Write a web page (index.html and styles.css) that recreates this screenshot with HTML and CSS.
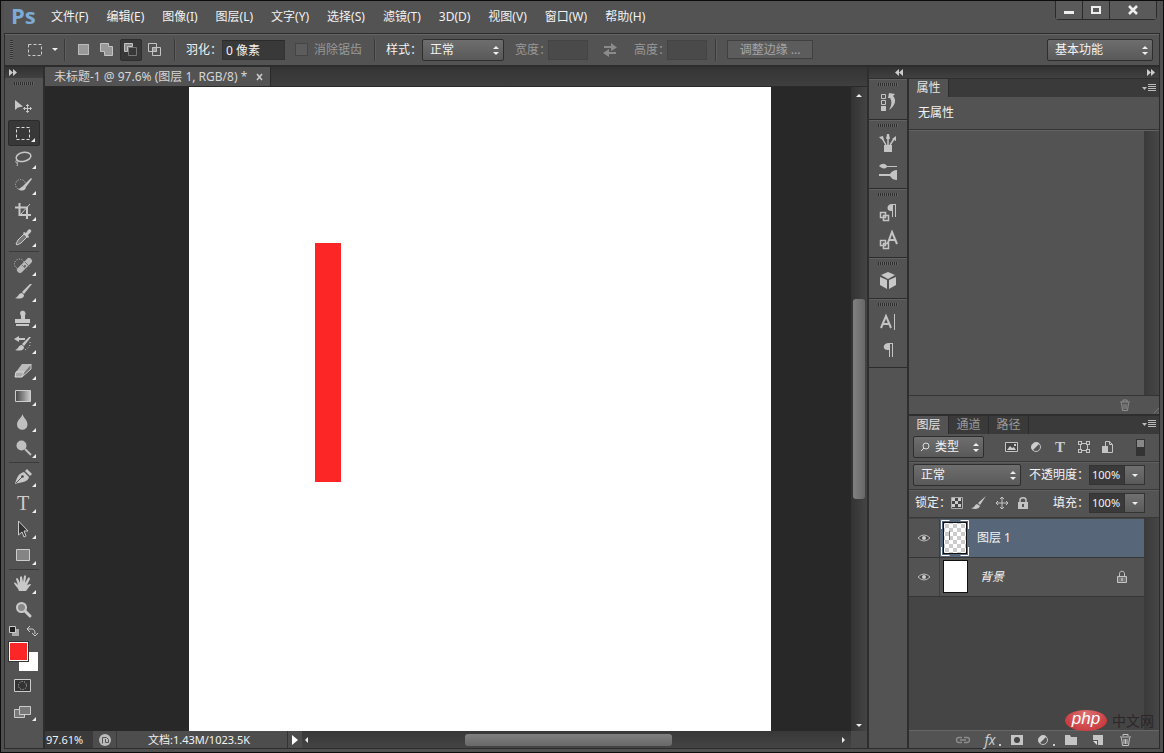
FILE: index.html
```
<!DOCTYPE html>
<html lang="zh-CN">
<head>
<meta charset="utf-8">
<title>未标题-1</title>
<link rel="stylesheet" href="styles.css">
</head>
<body>
<div class="window">
  <header class="menubar">
    <span class="logo">Ps</span>
    <nav class="menu">
      <button>文件(F)</button><button>编辑(E)</button><button>图像(I)</button><button>图层(L)</button><button>文字(Y)</button><button>选择(S)</button><button>滤镜(T)</button><button>3D(D)</button><button>视图(V)</button><button>窗口(W)</button><button>帮助(H)</button>
    </nav>
    <div class="winbuttons">
      <button class="wb" aria-label="最小化"><svg width="12" height="12"><path d="M1 7h10v3H1z" fill="#eee"/></svg></button>
      <button class="wb" aria-label="最大化"><svg width="12" height="12"><path d="M2 3h8v6H2z" fill="none" stroke="#eee" stroke-width="2"/></svg></button>
      <button class="wb wide" aria-label="关闭"><svg width="12" height="12"><path d="M2 2l8 8M10 2l-8 8" stroke="#eee" stroke-width="2.500"/></svg></button>
    </div>
  </header>

  <div class="options">
    <span class="vgrip"></span>
    <button class="preset" aria-label="矩形选框工具"><svg width="16" height="14"><rect x="1.500" y="1.500" width="13" height="11" fill="none" stroke="#ccc" stroke-dasharray="3 2"/></svg><i class="down"></i></button>
    <span class="div"></span>
    <div class="modes">
      <button aria-label="新选区"><svg width="16" height="16"><path d="M3 2h11v11H3z" fill="#999"/><path d="M3.500 2.500h10v10h-10z" fill="none" stroke="#bbb"/></svg></button>
      <button aria-label="添加到选区"><svg width="16" height="16"><path d="M1.500 1.500h8v3h4v9h-8v-4h-4z" fill="#999" stroke="#c4c4c4"/></svg></button>
      <button class="on" aria-label="从选区减去"><svg width="16" height="16"><path d="M5.500 5.500h8v8h-8z" fill="none" stroke="#777"/><path d="M1.500 1.500h8v3h-5v5h-3z" fill="#888" stroke="#c4c4c4"/></svg></button>
      <button aria-label="与选区交叉"><svg width="16" height="16"><path d="M5 5h5v5H5z" fill="#999"/><path d="M1.500 1.500h8v8h-8zM5.500 5.500h8v8h-8z" fill="none" stroke="#c4c4c4"/></svg></button>
    </div>
    <span class="div"></span>
    <label for="feather">羽化：</label><input id="feather" class="field feather" value="0 像素">
    <label class="check off"><input type="checkbox" disabled>消除锯齿</label>
    <span class="div"></span>
    <label for="style">样式：</label>
    <span class="drop stylesel"><select id="style"><option>正常</option></select><i class="updown"></i></span>
    <label class="off" for="w">宽度：</label><input id="w" class="field small" disabled>
    <button class="swapwh" aria-label="互换宽高"><svg width="14" height="14"><path d="M1 3h7V0l6 4.500L8 8V5H1zM13 9H6V6L0 10l6 4v-3h7z" fill="#8b8b8b"/></svg></button>
    <label class="off" for="h">高度：</label><input id="h" class="field small" disabled>
    <span class="div"></span>
    <button class="refine" disabled>调整边缘 ...</button>
    <span class="drop workspace"><select aria-label="工作区"><option>基本功能</option></select><i class="updown"></i></span>
  </div>

  <div class="main">
    <aside class="toolbar">
      <button class="strip" aria-label="展开工具栏"><svg width="10" height="7"><path d="M1 0l4 3.500L1 7zM5 0l4 3.500L5 7z" fill="#ccc"/></svg></button>
      <span class="grip"></span>
      <div class="tools">
        <button class="plain" aria-label="移动"><svg viewBox="0 0 20 20"><path d="M2 3v10l3-2.500 5-1z" fill="#c8c8c8"/><path d="M10.500 11.500h8M14.500 7.500v8M13 9l1.500-1.500L16 9M13 14l1.500 1.500L16 14M12 10l-1.500 1.500L12 13M17 10l1.500 1.500L17 13" fill="none" stroke="#c8c8c8"/></svg></button>
        <button class="on" aria-label="矩形选框"><svg viewBox="0 0 20 20"><rect x="3.500" y="4.500" width="13" height="12" fill="none" stroke="#ddd" stroke-dasharray="3 2"/></svg></button>
        <button aria-label="套索"><svg viewBox="0 0 20 20"><ellipse cx="10.500" cy="8" rx="7.500" ry="4.500" transform="rotate(-12 10 8)" fill="none" stroke="#c8c8c8" stroke-width="1.500"/><path d="M4 11c-2 1-1 3 0 3s2-2 0-2M4 14c0 1 1 1 0 3" fill="none" stroke="#c8c8c8"/></svg></button>
        <button aria-label="快速选择"><svg viewBox="0 0 20 20"><circle cx="7.500" cy="9.500" r="5" fill="none" stroke="#ccc" stroke-dasharray="1 1.500"/><path d="M19 4l-6 8-3-1 8-8zM12 12l-1-1c-3 0-3 3-6 3 4 3 8 1 8-2z" fill="#c8c8c8"/></svg></button>
        <button aria-label="裁剪"><svg viewBox="0 0 20 20"><path d="M6.500 2v12H18M2 6.500h12V18" fill="none" stroke="#c8c8c8" stroke-width="2"/><path d="M8 13l9-10" stroke="#c8c8c8"/></svg></button>
        <button aria-label="吸管"><svg viewBox="0 0 20 20"><path d="M3 17l2-4 6-6 3 3-6 6-4 2z" fill="#777" stroke="#ccc"/><path d="M10 6l1-1 2 1 2-3c2-2 4 0 3 2l-3 3 1 2-1 1z" fill="#c8c8c8"/></svg></button>
        <hr>
        <button aria-label="污点修复画笔"><svg viewBox="0 0 20 20"><circle cx="6.500" cy="8" r="5" fill="none" stroke="#ccc" stroke-dasharray="1 1.500"/><path d="M7 14l9-9" stroke="#b8b8b8" stroke-width="6" stroke-linecap="round"/><path d="M9 9l5 5M12 6l5 5" stroke="#777"/><path d="M12 9v2m-1-1h2" stroke="#555"/></svg></button>
        <button aria-label="画笔"><svg viewBox="0 0 20 20"><path d="M19 2l-8 10-2-2 8-8zM9 11l2 2c0 4-5 4-9 3 4-1 3-5 7-5z" fill="#c8c8c8"/></svg></button>
        <button aria-label="仿制图章"><svg viewBox="0 0 20 20"><path d="M8 8C4 1 15 1 12 8v3h5v4H2v-4h6zM3 16h13v2H3z" fill="#c8c8c8"/></svg></button>
        <button aria-label="历史记录画笔"><svg viewBox="0 0 20 20"><path d="M18 3l-7 9-2-2 7-7zM9 11l2 2c0 4-5 4-9 3 4-1 3-5 7-5zM1 5l5-3v2h6v2H6v2z" fill="#c8c8c8"/><path d="M17 8c1 4-2 6-5 8" fill="none" stroke="#ccc" stroke-dasharray="1 2"/></svg></button>
        <button aria-label="橡皮擦"><svg viewBox="0 0 20 20"><path d="M3 12l6-8h9l-7 8z" fill="#bbb"/><path d="M3 12h8l-2 5H2z" fill="#aaa" stroke="#ddd"/><path d="M11 12l7-8v5l-9 8z" fill="#777" stroke="#ccc"/></svg></button>
        <button aria-label="渐变"><svg viewBox="0 0 20 20"><defs><linearGradient id="gr"><stop stop-color="#444"/><stop offset="1" stop-color="#ccc"/></linearGradient></defs><path d="M2.500 4.500h15v11h-15z" fill="url(#gr)" stroke="#ccc"/></svg></button>
        <button aria-label="模糊"><svg viewBox="0 0 20 20"><path d="M9.500 2c1 4 5 6 5 10.500a5 5 0 0 1-10.500 0C4 8 8.500 6 9.500 2z" fill="#c0c0c0"/></svg></button>
        <button aria-label="减淡"><svg viewBox="0 0 20 20"><circle cx="8.500" cy="7.500" r="5" fill="#c0c0c0"/><path d="M12 11l6 6" stroke="#c0c0c0" stroke-width="2"/></svg></button>
        <hr>
        <button aria-label="钢笔"><svg viewBox="0 0 20 20"><path d="M2 17C4 10 5 7 11 5l5 5c-1 5-7 5-14 7zM12 4l2-2 5 5-2 2z" fill="#c8c8c8"/><path d="M3 16l6-6" stroke="#555"/><circle cx="9.500" cy="9.500" r="1.300" fill="#444"/></svg></button>
        <button aria-label="横排文字"><span class="serif">T</span></button>
        <button aria-label="路径选择"><svg viewBox="0 0 20 20"><path d="M5.500 2v14l3.500-3 2 5 2-1-2-5h4z" fill="#333" stroke="#ccc"/></svg></button>
        <button aria-label="矩形"><svg viewBox="0 0 20 20"><path d="M3.500 4.500h13v11h-13z" fill="#858585" stroke="#ccc"/></svg></button>
        <hr>
        <button aria-label="抓手"><svg viewBox="0 0 20 20"><path d="M6 17c-1-4-4-5-5-8 1-1 2 0 4 2L3 5c1-2 2-1 4 4V3c1-1 2-1 2 0l1 5 1-6c1-1 2-1 2 1l-1 6 3-5c1-1 2 0 2 1l-3 6 3-1c2 0 0 2-1 3l-3 4z" fill="#c8c8c8"/></svg></button>
        <button class="plain" aria-label="缩放"><svg viewBox="0 0 20 20"><circle cx="8.500" cy="7.500" r="4.500" fill="#888" stroke="#ccc" stroke-width="2"/><path d="M12 11l5 5" stroke="#ccc" stroke-width="3" stroke-linecap="round"/></svg></button>
      </div>
      <div class="mini">
        <button aria-label="默认颜色"><svg width="12" height="12"><path d="M4 4h7v7H4z" fill="#aaa"/><path d="M1.500 1.500h6v6h-6z" fill="#222" stroke="#ccc"/></svg></button>
        <button aria-label="切换颜色"><svg width="12" height="12"><path d="M2 4h4q3 0 3 5M4 1L1 4l3 3M6 8l3 3 3-3" fill="none" stroke="#ccc"/></svg></button>
      </div>
      <div class="swatches"><button class="bgc" aria-label="背景色"></button><button class="fgc" aria-label="前景色"></button></div>
      <div class="tools last">
        <button class="plain" aria-label="快速蒙版"><svg viewBox="0 0 20 20"><path d="M1.500 4.500h16v12h-16z" fill="#333" stroke="#ccc"/><circle cx="9.500" cy="10.500" r="4" fill="none" stroke="#ccc" stroke-dasharray="1 1.500"/></svg></button>
        <button aria-label="屏幕模式"><svg viewBox="0 0 20 20"><path d="M1.500 8.500h10v8h-10z" fill="#777" stroke="#ccc"/><path d="M6.500 5.500h11v8h-11z" fill="#777" stroke="#ccc"/></svg></button>
      </div>
    </aside>

    <section class="document">
      <div class="doctabs"><div class="doctab"><span>未标题-1 @ 97.6% (图层 1, RGB/8) *</span><button aria-label="关闭文档"><svg width="8" height="8"><path d="M1 1l5 6M6 1L1 7" stroke="#ccc" stroke-width="1.500"/></svg></button></div></div>
      <div class="view">
        <div class="stage"><div class="paper"><div class="redbar"></div></div></div>
        <div class="vscroll"><i class="up"></i><span class="vtrack"><b></b></span><i class="down"></i></div>
      </div>
      <div class="status">
        <input class="zoom" value="97.61%" aria-label="缩放比例">
        <button class="share" aria-label="共享"><svg width="12" height="12"><circle cx="6" cy="6" r="6" fill="#bbb"/><path d="M3.500 9.500v-6h4l2 2" fill="none" stroke="#555"/><path d="M6.500 5v3.500h3v-3" fill="none" stroke="#555"/></svg></button>
        <span class="size">文档:1.43M/1023.5K</span>
        <button class="play" aria-label="状态选项"><svg width="8" height="10"><path d="M1 0l6 5-6 5z" fill="#fff"/></svg></button>
        <div class="hscroll"><i class="left"></i><span class="htrack"><b></b></span><i class="right"></i></div>
        <span class="corner"></span>
      </div>
    </section>

    <section class="side">
      <div class="strips"><button class="strip a" aria-label="展开面板"><svg width="10" height="7"><path d="M5 0L1 3.500 5 7zM9 0L5 3.500 9 7z" fill="#ccc"/></svg></button><button class="strip b" aria-label="折叠面板"><svg width="10" height="7"><path d="M1 0l4 3.500L1 7zM5 0l4 3.500L5 7z" fill="#ccc"/></svg></button></div>
      <div class="cols">
        <div class="dock">
          <div class="group"><span class="grip"></span><button aria-label="历史记录"><svg viewBox="0 0 20 20"><path d="M3.500 2.500h4v4h-4zM3.500 8.500h4v4h-4z" fill="none" stroke="#c4c4c4"/><path d="M3 14h5v5H3zM10 6l1-5 6 1-2 2c4 4 2 10-4 14 3-5 3-9 1-12z" fill="#c4c4c4"/></svg></button></div>
          <div class="group"><span class="grip"></span><button aria-label="画笔预设"><svg viewBox="0 0 20 20"><path d="M6 12h8v7H6z" fill="#c4c4c4"/><path d="M8 12L4 5M10 12V4M12 12l4-6" stroke="#c4c4c4" stroke-width="1.500"/><path d="M1 4l4-1 1 4-3-1zM9 1l2 0 1 5H8zM14 6l4-3v5z" fill="#c4c4c4"/></svg></button><button aria-label="画笔"><svg viewBox="0 0 20 20"><path d="M1 5c3-3 6-3 8 0h10v1H9C6 9 4 7 1 5zM1 13h11c2-3 4-4 7-4v10c-3 0-5-1-7-4H1z" fill="#c4c4c4"/></svg></button></div>
          <div class="group"><span class="grip"></span><button aria-label="段落样式"><svg viewBox="0 0 20 20"><path d="M18 2v13h-1V3h-2v12h-1V9c-6 1-6-7 0-7z" fill="#c4c4c4"/><path d="M2.500 10.500h5v5h-5zM5.500 13.500h5v5h-5z" fill="none" stroke="#c4c4c4" stroke-width="1.500"/></svg></button><button aria-label="字符样式"><svg viewBox="0 0 20 20"><path d="M9.500 14L14 2l5 12M11 10h6" fill="none" stroke="#c4c4c4" stroke-width="2"/><path d="M2.500 10.500h5v5h-5zM5.500 13.500h5v5h-5z" fill="none" stroke="#c4c4c4" stroke-width="1.500"/></svg></button></div>
          <div class="group"><span class="grip"></span><button aria-label="3D"><svg viewBox="0 0 20 20"><path d="M10 1l7 3-7 4-7-4zM2 6l7 3v9l-7-4zM18 6l-7 3v9l7-4z" fill="#c8c8c8"/></svg></button></div>
          <div class="group"><span class="grip"></span><button aria-label="字符"><svg viewBox="0 0 20 20"><path d="M3 16L8 4l5 12M5 12h6" fill="none" stroke="#c4c4c4" stroke-width="2"/><path d="M16.500 2v16" stroke="#c4c4c4"/></svg></button><button aria-label="段落"><svg viewBox="0 0 20 20"><path d="M15 3v14h-1V4h-2v13h-1v-7c-7 1-7-7 0-7z" fill="#c4c4c4"/></svg></button></div>
        </div>
        <div class="panels">
          <section class="props">
            <div class="tabs"><button class="tab on">属性</button><button class="pmenu" aria-label="面板菜单"><svg width="14" height="9"><path d="M0 3h5L2.500 6zM6 0h8v1H6zM6 2h8v1H6zM6 4h8v1H6zM6 6h8v1H6z" fill="#bbb"/></svg></button></div>
            <div class="none">无属性</div>
            <div class="blank"><span></span></div>
            <div class="pfoot"><button aria-label="删除"><svg width="12" height="12"><path d="M1 3h10M4 3V1h4v2M2.500 4l1 7.500h5l1-7.500M5 5v5M7 5v5" fill="none" stroke="#909090"/></svg></button><span class="resize"></span></div>
          </section>
          <section class="layers">
            <div class="tabs"><button class="tab on">图层</button><button class="tab">通道</button><button class="tab">路径</button><button class="pmenu" aria-label="面板菜单"><svg width="14" height="9"><path d="M0 3h5L2.500 6zM6 0h8v1H6zM6 2h8v1H6zM6 4h8v1H6zM6 6h8v1H6z" fill="#bbb"/></svg></button></div>
            <div class="row filter">
              <span class="drop kind"><svg class="lens" width="10" height="10"><circle cx="6" cy="4" r="3" fill="none" stroke="#ddd"/><path d="M4 6L1 9" stroke="#ddd"/></svg><select aria-label="滤镜类型"><option>类型</option></select><i class="updown"></i></span>
              <div class="ficons">
                <button aria-label="像素图层"><svg width="14" height="14"><path d="M.500 2.500h12v9H.500z" fill="#444" stroke="#c4c4c4"/><path d="M2 10l3-4 2 2 2-1 2 3zM9 4h2v2H9z" fill="#ccc"/></svg></button>
                <button aria-label="调整图层"><svg width="14" height="14"><circle cx="7" cy="7" r="4.500" fill="#555" stroke="#c4c4c4"/><path d="M3.500 10.500A5 5 0 0 1 10.500 3.500z" fill="#ccc"/></svg></button>
                <button aria-label="文字图层"><span class="serif">T</span></button>
                <button aria-label="形状图层"><svg width="14" height="14"><path d="M3.500 3.500h7v7h-7z" fill="none" stroke="#c4c4c4"/><path d="M1 1h4v4H1zM9 1h4v4H9zM1 9h4v4H1zM9 9h4v4H9z" fill="#c4c4c4"/><path d="M2 2h2v2H2zM10 2h2v2h-2zM2 10h2v2H2zM10 10h2v2h-2z" fill="#555"/></svg></button>
                <button aria-label="智能对象"><svg width="14" height="14"><path d="M4.500 6V1.500h4l3 3v8H7M8.500 1.500v3h3" fill="none" stroke="#c4c4c4"/><path d="M1 6h6v7H1z" fill="#c4c4c4"/></svg></button>
              </div>
              <button class="toggle" aria-label="打开图层过滤"></button>
            </div>
            <div class="row">
              <span class="drop blend"><select aria-label="混合模式"><option>正常</option></select><i class="updown"></i></span>
              <label for="op">不透明度：</label><span class="pct"><input id="op" value="100%"><button aria-label="不透明度滑块"><i class="down"></i></button></span>
            </div>
            <div class="row lock">
              <span>锁定：</span>
              <div class="locks">
                <button aria-label="锁定透明像素"><svg width="12" height="12"><path d="M.500 .500h11v11H.500z" fill="#444" stroke="#aaa"/><path d="M1 1h3v3H1zM7 1h3v3H7zM4 4h3v3H4zM1 7h3v3H1zM7 7h3v3H7z" fill="#ccc"/></svg></button>
                <button aria-label="锁定图像像素"><svg width="16" height="14"><path d="M15 0L9 9 7 7zM6 8l3 2c-1 3-5 4-9 2 4 0 3-3 6-4z" fill="#c8c8c8"/></svg></button>
                <button aria-label="锁定位置"><svg width="14" height="14"><path d="M1 7h12M7 1v12M5 3l2-2 2 2M5 11l2 2 2-2M3 5L1 7l2 2M11 5l2 2-2 2" fill="none" stroke="#c4c4c4"/></svg></button>
                <button aria-label="锁定全部"><svg width="12" height="14"><path d="M3 6V4c0-3 6-3 6 0v2" fill="none" stroke="#c4c4c4" stroke-width="1.500"/><path d="M1 6h10v7H1z" fill="#c4c4c4"/><path d="M5 8h2v3H5z" fill="#555"/></svg></button>
              </div>
              <label for="fill">填充：</label><span class="pct"><input id="fill" value="100%"><button aria-label="填充滑块"><i class="down"></i></button></span>
            </div>
            <div class="listwrap">
              <ul class="list">
                <li class="sel"><button class="eye" aria-label="可见性"><svg width="14" height="10"><path d="M1 5q6-6 12 0-6 6-12 0z" fill="#444" stroke="#bbb"/><circle cx="7" cy="5" r="2" fill="#ccc"/></svg></button><span class="frame"><svg width="28" height="36"><defs><pattern id="ck" width="8" height="8" patternUnits="userSpaceOnUse"><path d="M0 0h8v8H0z" fill="#fff"/><path d="M0 0h4v4H0zM4 4h4v4H4z" fill="#ccc"/></pattern></defs><path d="M2 2h24v32H2z" fill="#111"/><path d="M3 3h22v30H3z" fill="url(#ck)"/><path d="M8 11h1v9H8z" fill="#f33"/><path d="M.500 9V.500h8M19.500 .500h8V9M27.500 27v8.500h-8M8.500 35.500h-8V27" fill="none" stroke="#fff"/></svg></span><span>图层 1</span></li>
                <li><button class="eye" aria-label="可见性"><svg width="14" height="10"><path d="M1 5q6-6 12 0-6 6-12 0z" fill="#444" stroke="#bbb"/><circle cx="7" cy="5" r="2" fill="#ccc"/></svg></button><span class="frame"><span class="white"></span></span><em>背景</em><svg class="padlock" width="12" height="13"><path d="M3.500 6V3.500c0-3 5-3 5 0V6" fill="none" stroke="#c4c4c4"/><path d="M1.500 6.500h9v6h-9z" fill="#777" stroke="#c4c4c4"/><path d="M5.500 8h1v3h-1z" fill="#ddd"/></svg></li>
              </ul>
              <span class="lscroll"></span>
            </div>
            <div class="lfoot">
              <button aria-label="链接图层"><svg width="16" height="14"><path d="M7 4.500H4a2.500 2.500 0 0 0 0 5h3M9 4.500h3a2.500 2.500 0 0 1 0 5H9M5 7h6" fill="none" stroke="#8c8c8c" stroke-width="1.300"/></svg></button>
              <button class="fx" aria-label="图层样式">fx<i></i></button>
              <button aria-label="图层蒙版"><svg width="16" height="14"><path d="M2 2h12v10H2z" fill="#c4c4c4"/><circle cx="8" cy="7" r="3" fill="#444"/></svg></button>
              <button class="adj" aria-label="调整图层"><svg width="16" height="14"><circle cx="7" cy="7" r="4.500" fill="#555" stroke="#c4c4c4"/><path d="M3.500 10.500A5 5 0 0 1 10.500 3.500z" fill="#ccc"/></svg><i></i></button>
              <button aria-label="新建组"><svg width="16" height="14"><path d="M2 2h5l1 2h6v8H2z" fill="#c4c4c4"/></svg></button>
              <button aria-label="新建图层"><svg width="16" height="14"><path d="M3 2h10v10H8V7H3z" fill="#c4c4c4"/><path d="M3 8h4v4z" fill="#ddd"/></svg></button>
              <button aria-label="删除图层"><svg width="16" height="14"><path d="M3 4h11M6 3V1.500h5V3M4.500 5l1 7.500h6l1-7.500M7 6v5M8.500 6v5M10 6v5" fill="none" stroke="#c4c4c4"/></svg></button>
            </div>
          </section>
        </div>
      </div>
    </section>
  </div>
  <div class="watermark"><span class="php">php</span><span>中文网</span></div>
</div>
</body>
</html>
```
FILE: styles.css
```
* { box-sizing: border-box; }
body { margin: 0; background: #000; }
button, input, select { font: inherit; color: inherit; margin: 0; padding: 0; border: 0; background: none; border-radius: 0; outline: 0; min-width: 0; }
button { display: flex; align-items: center; justify-content: center; flex: none; }
svg { display: block; flex: none; }
label, span, button { white-space: nowrap; }
.window { position: relative; display: flex; flex-direction: column; height: 100vh; padding: 0 3px 3px; background: #505050; border: solid #0c0c0c; border-width: 1px 1px 1px; font: 12px/16px "Noto Sans", "Noto Sans CJK SC", sans-serif; color: #f2f2f2; overflow: hidden; }

.menubar { display: flex; flex: none; height: 32px; align-items: center; background: #535353; }
.logo { width: 39px; padding: 0 0 4px 7px; font: bold 22px/28px "Open Sans", sans-serif; color: #7daad6; }
.menu { display: flex; flex: 1; gap: 18px; padding-left: 8px; }
.winbuttons { display: flex; align-self: flex-start; margin-right: 3px; border: 1px solid #2a2a2a; border-top: 0; border-radius: 0 0 4px 4px; }
.wb { width: 27px; height: 18px; border-right: 1px solid #2a2a2a; background: #5a5a5a; }
.wb.wide { width: 46px; border: 0; }

.options { display: flex; flex: none; height: 34px; align-items: center; border: 1px solid #2c2c2c; border-bottom-width: 2px; background: #535353; padding: 0 6px 0 5px; box-shadow: inset 0 1px #666; }
.vgrip { width: 3px; height: 20px; margin-right: 14px; background: repeating-linear-gradient(#333 0 1px, #666 1px 2px); }
.preset { gap: 9px; }
.down, .up { width: 0; height: 0; border: 3px solid transparent; }
.down { border-top-color: #eee; border-bottom: 0; }
.up { border-bottom-color: #eee; border-top: 0; }
.div { width: 2px; height: 22px; margin: 0 6px; border-left: 1px solid #3a3a3a; border-right: 1px solid #5e5e5e; flex: none; }
.modes { display: flex; gap: 2px; margin-right: 2px; }
.modes button { width: 22px; height: 22px; }
.modes .on { background: #383838; border: 1px solid #2e2e2e; border-radius: 2px; }
.div + label { margin-left: 4px; }
.field { height: 20px; padding-left: 3px; background: #393939; border: 1px solid #333; border-top-color: #2a2a2a; }
.feather { width: 63px; margin-right: 10px; }
.small { width: 40px; background: #4a4a4a; border-color: #444; }
.off { color: #989898; }
.check { display: flex; align-items: center; gap: 6px; margin-right: 6px; }
.check input { appearance: none; width: 13px; height: 13px; background: #5c5c5c; border: 1px solid #454545; }
.drop { position: relative; display: flex; align-items: center; height: 22px; border: 1px solid #2e2e2e; border-radius: 2px; background: linear-gradient(#6e6e6e, #595959); }
.drop select { appearance: none; flex: 1; height: 20px; padding-left: 7px; }
.updown { position: absolute; right: 4px; top: 50%; width: 6px; height: 9px; margin-top: -4px; }
.updown::before, .updown::after { content: ""; position: absolute; left: 0; border: 3px solid transparent; }
.updown::before { top: 0; border-top: 0; border-bottom-color: #eee; }
.updown::after { bottom: 0; border-bottom: 0; border-top-color: #eee; }
.stylesel { width: 82px; margin-right: 11px; }
.stylesel + label + .small { margin-left: -3px; }
.swapwh { margin: 0 17px 0 15px; }
.swapwh + label + .small { margin-left: -3px; }
.small + .div { margin: 0 10px 0 8px; }
.refine { width: 86px; height: 19px; border: 1px solid #404040; background: #5c5c5c; color: #a5a5a5; }
.workspace { width: 106px; margin-left: auto; }

.main { display: flex; flex: 1; min-height: 0; background: #2e2e2e; gap: 2px; border: solid #2c2c2c; border-width: 0 1px 1px; }
.strip { width: 100%; height: 11px; justify-content: flex-start; padding-left: 3px; background: linear-gradient(#333, #404040); }
.toolbar { display: flex; flex-direction: column; align-items: center; width: 38px; flex: none; background: #535353; }
.grip { width: 20px; height: 3px; flex: none; background: repeating-linear-gradient(90deg, #2c2c2c 0 1px, #666 1px 2px); }
.toolbar .grip { margin: 4px 0 9px; }
.tools { display: flex; flex-direction: column; align-items: center; width: 100%; }
.tools button { position: relative; width: 32px; height: 26px; }
.tools svg { width: 20px; height: 20px; margin-right: 2px; }
.tools .serif { margin-right: 2px; }
.tools button:not(.plain)::after { content: ""; position: absolute; right: 4px; bottom: 3px; border: solid transparent; border-width: 2px; border-right-color: #eee; border-bottom-color: #eee; }
.tools .on { background: #383838; border: 1px solid #2b2b2b; border-radius: 2px; }
.tools hr { width: 30px; margin: 1px 0; border: 0; border-top: 1px solid #3a3a3a; }
.serif { font: 20px/20px "Liberation Serif", serif; color: #ccc; }
.mini { display: flex; gap: 6px; height: 16px; align-items: center; margin-right: 3px; }
.swatches { position: relative; width: 29px; height: 29px; margin: 3px 2px 0 0; }
.swatches button { position: absolute; width: 19px; height: 19px; }
.fgc { left: 0; top: 0; background: #fd2626; border: 1px solid #fff; outline: 1px solid #333; }
.bgc { right: 0; bottom: 0; background: #fff; }
.last { margin-top: 1px; }

.document { display: flex; flex-direction: column; flex: 1; min-width: 0; }
.doctabs { display: flex; flex: none; height: 20px; background: linear-gradient(#343434, #3f3f3f); border-bottom: 1px solid #2a2a2a; }
.doctab { display: flex; align-items: center; gap: 9px; padding: 0 6px 0 9px; background: #535353; color: #d6d6d6; border-right: 1px solid #2a2a2a; }
.view { display: flex; flex: 1; min-height: 0; background: #282828; }
.stage { display: grid; flex: 1; grid-template-columns: 144fr 581fr 80fr; }
.paper { position: relative; grid-column: 2; background: #fff; }
.redbar { position: absolute; left: 21.6%; top: 24.2%; width: 4.5%; height: 37.1%; background: #fd2626; }
.vscroll { display: flex; flex-direction: column; align-items: center; width: 16px; padding: 7px 0 4px; background: linear-gradient(90deg, #333, #444); }
.vtrack { flex: 1; width: 12px; padding: 202px 0 0; }
.vtrack b { display: block; height: 47%; border-radius: 3px; background: linear-gradient(90deg, #808080, #686868); }
.status { display: flex; flex: none; height: 17px; align-items: center; background: #3e3e3e; }
.zoom { width: 48px; height: 17px; padding-left: 1px; background: #3a3a3a; font-size: 11px; }
.share { width: 24px; height: 17px; border-right: 1px solid #3a3a3a; background: #4d4d4d; }
.size { width: 170px; padding-left: 31px; background: #4d4d4d; font-size: 11px; line-height: 17px; }
.play { width: 15px; height: 17px; border-left: 1px solid #333; background: #4d4d4d; }
.hscroll { display: flex; flex: 1; align-items: center; height: 17px; padding: 0 6px 0 3px; background: linear-gradient(#383838, #444); }
.left { width: 0; height: 0; border: 3px solid transparent; border-right-color: #eee; border-left: 0; }
.right { width: 0; height: 0; border: 3px solid transparent; border-left-color: #eee; border-right: 0; }
.htrack { flex: 1; padding-left: 29%; }
.htrack b { display: block; width: 55%; height: 12px; border-radius: 3px; background: linear-gradient(#808080, #686868); }
.corner { width: 16px; height: 17px; background: #4a4a4a; }

.side { display: flex; flex-direction: column; width: 290px; flex: none; }
.strips { display: flex; height: 11px; flex: none; }
.strips .a { width: 38px; justify-content: flex-end; padding-right: 3px; }
.strips .b { width: auto; flex: 1; justify-content: flex-end; padding-right: 3px; }
.cols { display: flex; flex: 1; min-height: 0; gap: 2px; padding-top: 1px; }
.dock { width: 38px; flex: none; background: #535353; }
.group { display: flex; flex-direction: column; align-items: center; padding: 4px 0 3px; border-bottom: 1px solid #2c2c2c; box-shadow: inset 0 1px #626262; }
.group .grip { margin-bottom: 2px; }
.group button { width: 30px; height: 28px; }
.group svg { width: 20px; height: 20px; }
.panels { display: flex; flex-direction: column; flex: 1; gap: 2px; min-width: 0; }
.tabs { display: flex; flex: none; height: 18px; background: #3a3a3a; }
.tab { width: 40px; height: 18px; border-right: 1px solid #2c2c2c; color: #999; }
.tab.on { background: #535353; color: #e4e4e4; }
.pmenu { margin-left: auto; padding-right: 3px; }
.props { display: flex; flex-direction: column; height: 50%; background: #535353; }
.none { height: 33px; flex: none; padding: 8px 9px; border-bottom: 1px solid #333; }
.blank { display: flex; flex: 1; justify-content: flex-end; border-top: 1px solid #636363; }
.blank span, .lscroll { width: 15px; background: linear-gradient(90deg, #3a3a3a, #464646); }
.pfoot { display: flex; height: 19px; flex: none; justify-content: flex-end; align-items: center; gap: 19px; border-top: 1px solid #333; }
.resize { width: 9px; height: 9px; align-self: flex-end; background: repeating-linear-gradient(135deg, #535353 0 2px, #777 2px 3px); clip-path: polygon(100% 0, 100% 100%, 0 100%); }
.layers { display: flex; flex-direction: column; flex: 1; min-height: 0; background: #535353; }
.row { display: flex; flex: none; height: 28px; align-items: center; padding: 0 14px 0 4px; border-bottom: 1px solid #393939; box-shadow: inset 0 1px #5f5f5f; }
.filter { box-shadow: none; }
.kind { width: 71px; }
.lens { margin-left: 6px; }
.kind select { padding-left: 5px; }
.ficons { display: flex; align-items: center; gap: 10px; margin-left: 21px; }
.ficons button { width: 14px; }
.ficons .serif { font: bold 15px/16px "Liberation Serif", serif; }
.toggle { width: 9px; height: 17px; margin-left: auto; background: linear-gradient(#888 0 50%, #333 50%); border: 1px solid #333; }
.blend { width: 111px; margin-right: 8px; }
.pct { display: flex; height: 20px; margin-left: auto; border: 1px solid #333; }
.pct input { width: 34px; padding-left: 2px; background: #3a3a3a; font-size: 11px; }
.pct button { width: 20px; background: linear-gradient(#707070, #5a5a5a); border-left: 1px solid #333; }
.lock > span:first-child { padding-left: 2px; }
.locks { display: flex; align-items: center; gap: 8px; flex: 1; }
.lock .pct { margin-left: 0; }
.listwrap { display: flex; flex: 1; min-height: 0; background: #454545; border-bottom: 1px solid #666; }
.list { flex: 1; margin: 0; padding: 1px 0 0; list-style: none; }
.list li { display: flex; height: 39px; align-items: center; border-bottom: 1px solid #363636; background: #535353; }
.list .sel { background: linear-gradient(90deg, #535353 31px, #586679 31px); }
.eye { width: 31px; height: 38px; border-right: 1px solid #3e3e3e; }
.frame { display: flex; width: 30px; justify-content: center; margin-right: 7px; }
.white { width: 25px; height: 33px; border: 1px solid #111; background: #fff; }
.list em { padding-left: 3px; }
.padlock { margin-left: auto; margin-right: 16px; }
.lfoot { display: flex; height: 17px; flex: none; align-items: center; justify-content: flex-end; gap: 11px; padding-right: 26px; }
.fx { position: relative; width: 16px; font: italic 14px/14px "Noto Sans", sans-serif; color: #ccc; }
.adj { position: relative; }
.fx i, .adj i { position: absolute; right: -3px; bottom: 1px; width: 2px; height: 2px; background: #ccc; }

.watermark { position: absolute; right: 9px; bottom: 21px; display: flex; align-items: center; gap: 5px; color: #2e2527; font-size: 14px; line-height: 20px; }
.php { width: 42px; height: 21px; border-radius: 50%; background: radial-gradient(ellipse at 50% 20%, #dc7070, #c42b30); color: #fff; font: italic 17px/18px "Liberation Sans", sans-serif; text-align: center; }
```
